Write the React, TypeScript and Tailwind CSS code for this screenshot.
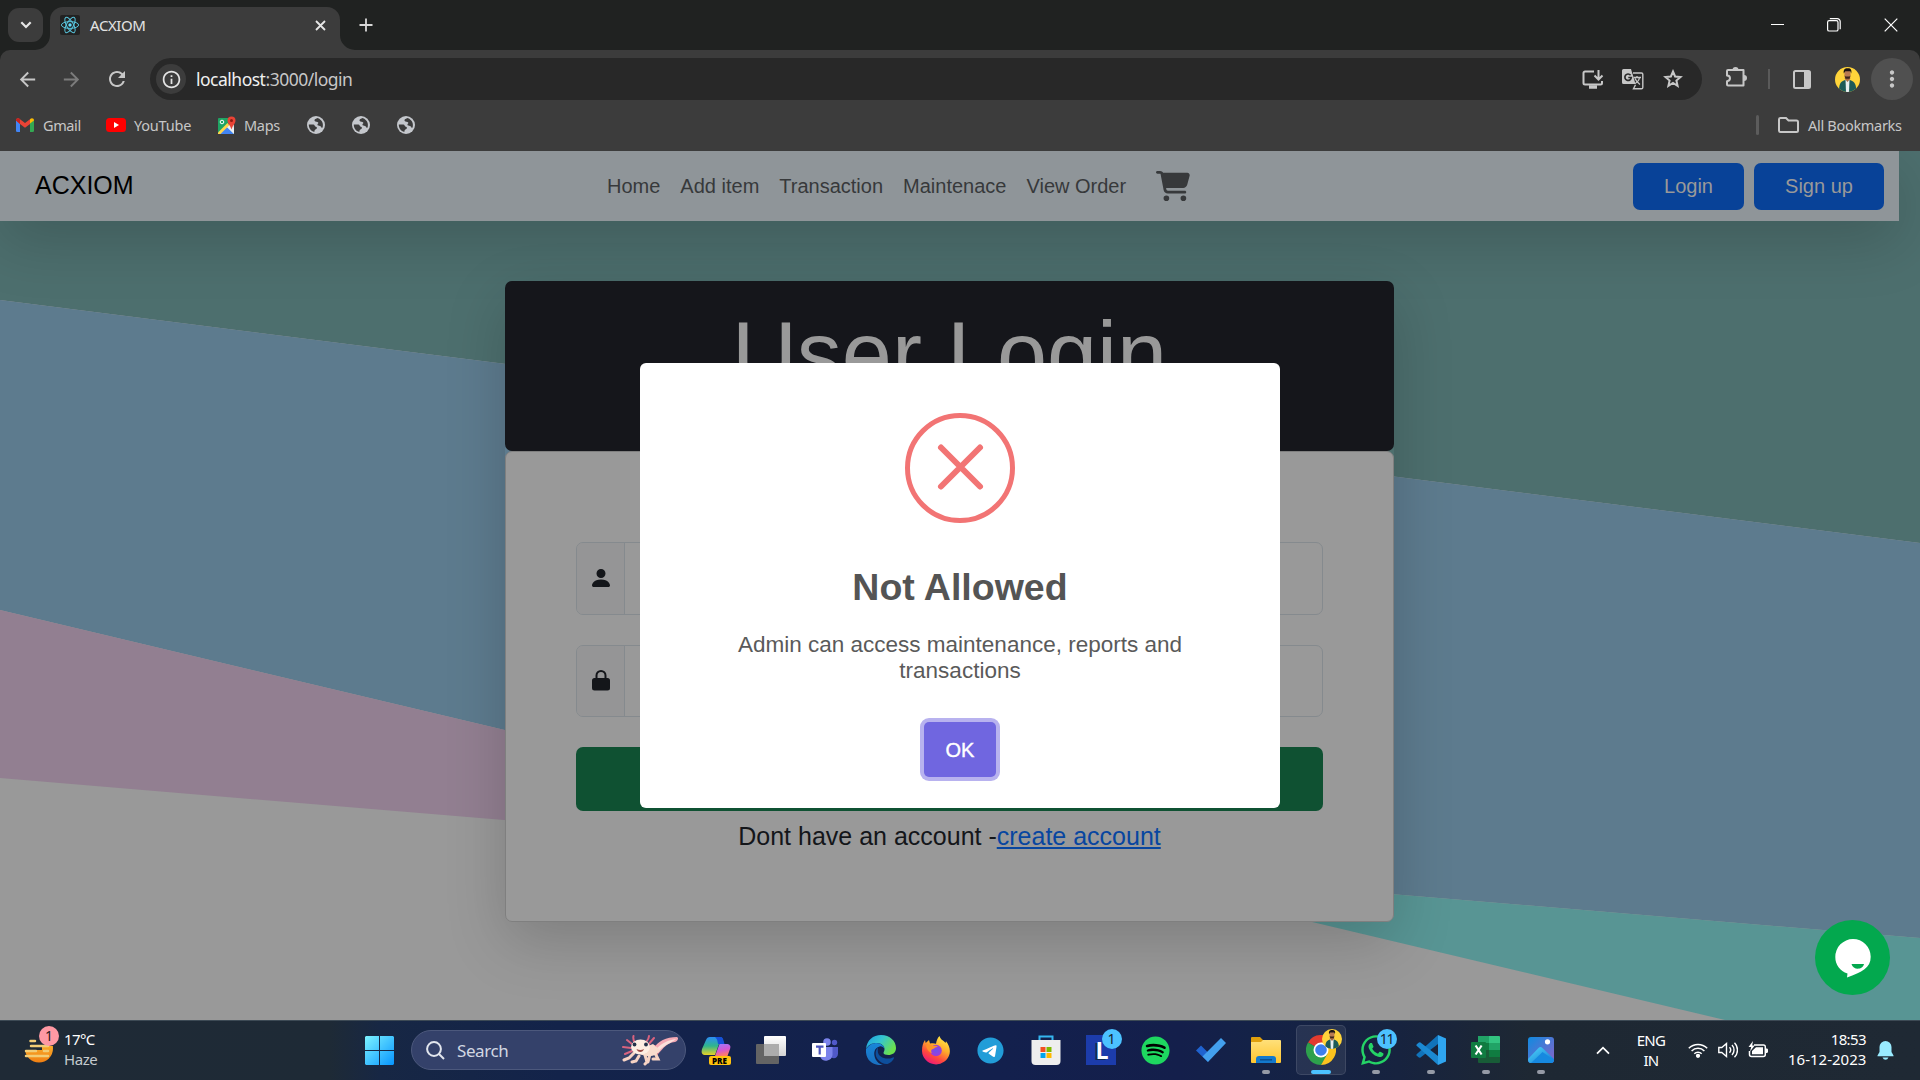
import React from "react";
import { FaCartShopping, FaSpotify, FaTelegram, FaWhatsapp } from "react-icons/fa6";
import { BsPersonFill } from "react-icons/bs";
import {
  MdArrowBack,
  MdArrowForward,
  MdRefresh,
  MdInfoOutline,
  MdMoreVert,
} from "react-icons/md";

const ui = "font-['Noto_Sans','Open_Sans',sans-serif]";

function ReactLogo() {
  return (
    <svg width="20" height="20" viewBox="0 0 20 20" className="shrink-0">
      <rect width="20" height="20" rx="2" fill="#222" />
      <g fill="none" stroke="#58c4dc" strokeWidth="1">
        <ellipse cx="10" cy="10" rx="8.6" ry="3.4" />
        <ellipse cx="10" cy="10" rx="8.6" ry="3.4" transform="rotate(60 10 10)" />
        <ellipse cx="10" cy="10" rx="8.6" ry="3.4" transform="rotate(120 10 10)" />
      </g>
      <circle cx="10" cy="10" r="1.7" fill="#61dafb" />
    </svg>
  );
}

function Gmail() {
  return (
    <svg width="18" height="14" viewBox="0 0 18 14">
      <path d="M0 2v10.7Q0 14 1.3 14H4V5z" fill="#4285f4" />
      <path d="M18 2v10.7Q18 14 16.700 14H14V5z" fill="#34a853" />
      <path d="M14 5.500V1.200C15.600-.3 18 .2 18 2.500z" fill="#fbbc04" />
      <path d="M0 2.500C0 .2 2.400-.3 4 1.200l5 3.800 5-3.800v4.800l-5 3.800-5-3.800z" fill="#ea4335" />
      <path d="M0 2.500C0 .2 2.400-.3 4 1.200V6z" fill="#c5221f" />
    </svg>
  );
}

function YouTube() {
  return (
    <svg width="20" height="14" viewBox="0 0 20 14">
      <rect width="20" height="14" rx="3.500" fill="#f00" />
      <path d="M8 4l5 3-5 3z" fill="#fff" />
    </svg>
  );
}

function Maps() {
  return (
    <svg width="19" height="19" viewBox="0 0 19 19">
      <rect x="1" y="2" width="16" height="16" rx="1" fill="#1fa463" />
      <path d="M17 18V8l-8.500 3z" fill="#dadce0" />
      <path d="M9.500 10.500L2 18h15z" fill="#4285f4" />
      <path d="M9.500 10.500l7.500 7.500V12l-4-4z" fill="#eceff1" />
      <path d="M1 16.500L10.500 7l1.800 2.300L3.500 18H1z" fill="#ffd54b" />
      <circle cx="5" cy="6" r="1.800" fill="none" stroke="#fff" />
      <path d="M14.500 0.500a4 4 0 0 1 4 4c0 3-2.700 4.500-4 9-1.300-4.500-4-6-4-9a4 4 0 0 1 4-4z" fill="#ea4335" />
      <circle cx="14.500" cy="4.500" r="1.500" fill="#8c1b12" />
    </svg>
  );
}

function Avatar({ size, id }: { size: number; id: string }) {
  return (
    <svg width={size} height={size} viewBox="0 0 25 25" className="shrink-0">
      <defs>
        <clipPath id={id}>
          <circle cx="12.500" cy="12.500" r="12.500" />
        </clipPath>
      </defs>
      <g clipPath={`url(#${id})`}>
        <rect width="25" height="25" fill="#ffd43a" />
        <path d="M4 25c0-8 1-10 6-12h5c5 2 6 4 6.500 12z" fill="#1d5a58" />
        <path d="M10.500 12.500h4L14 25h-3z" fill="#e8eef0" />
        <path d="M9.800 8h5.400v4l-2.700 3-2.700-3z" fill="#a86c45" />
        <ellipse cx="12.500" cy="7" rx="3.100" ry="4" fill="#b97b52" />
        <path d="M9.500 8.500l1 3.200h4l1-3.200-1 1h-4z" fill="#3a261c" />
        <path d="M8.800 6.500C8 1.500 11 1 13 1.300c3 0 4 2 3.200 5.200l-.9-2.200h-5z" fill="#1b1514" />
      </g>
    </svg>
  );
}

function TabStrip() {
  return (
    <div className="flex h-[50px] bg-[#202221] pl-2">
      <div className="mt-2 flex h-[34px] w-[35px] items-center justify-center rounded-[11px] bg-[#3c3c3c]">
        <svg width="12" height="8" viewBox="0 0 12 8" fill="none" stroke="#e6e6e6" strokeWidth="2.200">
          <path d="M1.300 1.300L6 6l4.700-4.700" />
        </svg>
      </div>
      <div className="relative ml-[7px] mt-[7px] flex h-[43px] w-[290px] items-center rounded-t-[13px] bg-[#3c3c3c] pl-[10px]">
        <svg className="absolute -left-[15px] bottom-0" width="15" height="15" viewBox="0 0 15 15">
          <path d="M15 0v15H0A15 15 0 0 0 15 0z" fill="#3c3c3c" />
        </svg>
        <svg className="absolute -right-[15px] bottom-0" width="15" height="15" viewBox="0 0 15 15">
          <path d="M0 0v15h15A15 15 0 0 1 0 0z" fill="#3c3c3c" />
        </svg>
        <div className="-mt-[7px] flex w-full items-center">
          <ReactLogo />
          <span className={`${ui} ml-[10px] text-[15px] leading-5 tracking-[-0.4px] text-[#e3e3e3]`}>ACXIOM</span>
          <svg className="ml-auto mr-[14px]" width="11" height="11" viewBox="0 0 11 11" stroke="#e6e6e6" strokeWidth="1.800">
            <path d="M1 1l9 9M10 1l-9 9" />
          </svg>
        </div>
      </div>
      <svg className="ml-[19px] mt-[18px]" width="14" height="14" viewBox="0 0 14 14" stroke="#d8d8d8" strokeWidth="1.800">
        <path d="M7 .5v13M.5 7h13" />
      </svg>
      <div className="ml-auto mr-[22px] mt-[18px] flex">
        <svg width="13" height="14" viewBox="0 0 13 14" stroke="#fff">
          <path d="M0 6.500h13" />
        </svg>
        <svg className="ml-[43px]" width="14" height="14" viewBox="0 0 14 14" fill="none" stroke="#fff" strokeWidth="1.200">
          <rect x=".6" y="2.600" width="10.400" height="10.400" rx="1.600" />
          <path d="M2.800.6h7.400a3 3 0 0 1 3 3v7.600" />
        </svg>
        <svg className="ml-[43px]" width="14" height="14" viewBox="0 0 14 14" stroke="#fff" strokeWidth="1.200">
          <path d="M.7.7l12.600 12.600M13.300.7L.7 13.300" />
        </svg>
      </div>
    </div>
  );
}

function AddressBar() {
  return (
    <div className="bg-[#202221]">
      <div className="flex h-[58px] items-center rounded-t-[10px] bg-[#3c3c3c]">
        <div className="ml-4 flex w-[134px] items-center gap-[21px]">
          <MdArrowBack size={23} color="#c7c7c7" />
          <MdArrowForward size={23} color="#7c7c7c" />
          <MdRefresh className="ml-px" size={24} color="#c7c7c7" />
        </div>
        <div className="flex h-[42px] w-[1552px] items-center rounded-full bg-[#282828] pl-[6px] pr-[19px]">
          <div className="flex h-[30px] w-[30px] items-center justify-center rounded-full bg-[#3c3c3c]">
            <MdInfoOutline size={21} color="#e3e3e3" />
          </div>
          <span className={`${ui} ml-[10px] text-[17.500px] leading-6 tracking-[-0.5px] text-[#c7c7c7]`}>
            <span className="text-[#f0f0f0]">localhost</span>:3000/login
          </span>
          <div className="ml-auto flex items-center">
            <svg width="22" height="19" viewBox="0 0 22 19" fill="none" stroke="#c7c7c7" strokeWidth="2">
              <path d="M12 1.500H3A1.500 1.500 0 0 0 1.500 3v10A1.500 1.500 0 0 0 3 14.500h15.500A1.500 1.500 0 0 0 20 13v-2" />
              <path d="M16.500 0v9M12.500 5.500l4 4 4-4" />
              <path d="M7 17h8" strokeWidth="3.500" />
            </svg>
            <svg className="ml-[18px]" width="22" height="22" viewBox="0 0 22 22">
              <path d="M1.500 1H9l4.500 15H1.500A1.500 1.500 0 0 1 0 14.500v-12A1.500 1.500 0 0 1 1.500 1z" fill="#c7c7c7" />
              <path d="M8.600 7.200a3.200 3.200 0 1 0 .7 2.300H6.300" fill="none" stroke="#282828" strokeWidth="1.700" />
              <path d="M11 5h8.500A1.300 1.300 0 0 1 20.800 6.300v13.200a1.300 1.300 0 0 1-1.300 1.300H11.500l2-4" fill="none" stroke="#c7c7c7" strokeWidth="1.400" />
              <path d="M11.500 9.500h7.500M15 8v1.500M17.500 9.500c-.5 3-2.500 5-4.500 6M13 10.500c1 2.500 3 4.500 5 6" fill="none" stroke="#c7c7c7" strokeWidth="1.300" />
            </svg>
            <svg className="ml-[19px]" width="20" height="20" viewBox="0 0 20 20" fill="none" stroke="#c7c7c7" strokeWidth="2">
              <path d="M10 2.500L12.100 7.500 17.500 8 13.400 11.500 14.600 16.800 10 14 5.400 16.800 6.600 11.500 2.500 8 7.900 7.500z" />
            </svg>
          </div>
        </div>
        {/* extensions puzzle piece: notch on the left, knobs on the top and right */}
        <svg className="ml-[23px] mb-[3px]" width="23" height="23" viewBox="0 0 23 23">
          <path
            d="M3 4h15.500v15.500H3q-1 0-1-1v-3.300q3-.2 3-2.900t-3-2.900V5q0-1 1-1z"
            fill="none"
            stroke="#c7c7c7"
            strokeWidth="2"
            strokeLinejoin="round"
          />
          <path d="M7.500 4a3 3 0 0 1 6 0zM19 9a3 3 0 0 1 0 6z" fill="#c7c7c7" />
        </svg>
        <div className="ml-[20px] h-5 w-[2px] bg-[#5a5a5a]" />
        <svg className="ml-[23px]" width="18" height="19" viewBox="0 0 18 19">
          <rect x="1" y="1" width="16" height="17" rx="1.500" fill="none" stroke="#c7c7c7" strokeWidth="2" />
          <path d="M11 1h6v17h-6z" fill="#c7c7c7" />
        </svg>
        <div className="ml-6">
          <Avatar size={25} id="avatar-toolbar" />
        </div>
        <div className="ml-[11px] flex h-[42px] w-[42px] items-center justify-center rounded-full bg-[#505050]">
          <MdMoreVert size={26} color="#c7c7c7" />
        </div>
      </div>
    </div>
  );
}

function Bookmarks() {
  const label = `${ui} text-[14.500px] leading-5 text-[#c7c7c7]`;
  return (
    <div className="flex h-[43px] items-center bg-[#3c3c3c] pb-[9px] pl-4 pr-[17px]">
      <div className="flex w-[90px] items-center gap-[9px]">
        <Gmail />
        <span className={`${label} tracking-[-0.4px]`}>Gmail</span>
      </div>
      <div className="flex w-[111px] items-center gap-2">
        <YouTube />
        <span className={`${label} tracking-[-0.2px]`}>YouTube</span>
      </div>
      <div className="flex w-[88px] items-center gap-2">
        <Maps />
        <span className={`${label} tracking-[-0.3px]`}>Maps</span>
      </div>
      <div className="flex gap-[23px]">
        {[0, 1, 2].map((i) => (
          <svg key={i} width="22" height="22" viewBox="0 0 22 22">
            <circle cx="11" cy="11" r="9" fill="#c4c7cc" />
            <path d="M3.800 10.500h4.500c1.500 0 1.200 2 2.500 2.300 1.200.2 1.400 1.200.8 1.900-1 .8-2.300 1-2.300 3.300C6 17.300 3.600 14 3.800 10.500zM12.500 4c-2.500.8-3.500 1.800-2.800 3s2.800.3 3.500 1.500-1.500 1.500-.5 2.800 3.500.2 3.700 2.400l1.300-.3c.7-3.400.2-7.300-5.200-9.400z" fill="#3c3c3c" />
          </svg>
        ))}
      </div>
      <div className="ml-auto h-5 w-[3px] rounded bg-[#5c5c5c]" />
      <svg className="ml-[19px]" width="21" height="16" viewBox="0 0 21 16" fill="none" stroke="#c7c7c7" strokeWidth="2">
        <path d="M2.500 1H8l2.500 2.500h8q1.500 0 1.500 1.500v8.500q0 1.500-1.500 1.500h-16Q1 15 1 13.500v-11Q1 1 2.500 1z" />
      </svg>
      <span className={`${label} ml-[9px] w-[95px] whitespace-nowrap tracking-[-0.3px]`}>All Bookmarks</span>
    </div>
  );
}

function Backdrop() {
  return (
    <svg className="absolute inset-0" width="1920" height="869" viewBox="0 151 1920 869">
      <rect y="151" width="1920" height="869" fill="#999" />
      <path d="M0 151H1920V543L0 300z" fill="#4d6f6e" />
      <path d="M0 300L1920 543V938L1089 869 0 610z" fill="#5d7b8e" />
      <path d="M0 610L1089 869 0 778z" fill="#927f91" />
      <path d="M1089 869L1920 938V1020H1725z" fill="#589594" />
    </svg>
  );
}

function Navbar() {
  return (
    <nav className="relative flex h-[70px] w-[1899px] items-center bg-[#8f9599] pl-[35px] pr-[15px] shadow-[0_20px_60px_rgba(0,0,0,0.175)]">
      <span className="-mt-[2px] w-[572px] text-[25px] leading-[38px] text-black">ACXIOM</span>
      <div className="flex items-center gap-5 whitespace-nowrap text-[20px] leading-[30px] text-[#37393b]">
        <span>Home</span>
        <span>Add item</span>
        <span>Transaction</span>
        <span>Maintenace</span>
        <span>View Order</span>
        <FaCartShopping className="ml-[10px]" size={34} />
      </div>
      <div className="ml-auto flex gap-[10px] text-[20px] leading-[30px] text-[#999]">
        <button className="h-[47px] w-[111px] rounded-[7px] bg-[#084298]">Login</button>
        <button className="h-[47px] w-[130px] rounded-[7px] bg-[#084298]">Sign up</button>
      </div>
    </nav>
  );
}

function Field({ children, height }: { children: React.ReactNode; height: string }) {
  return (
    <div className={`flex w-full rounded-[7px] border border-[#858a8e] ${height}`}>
      <div className="flex w-12 items-center justify-center rounded-l-[6px] border-r border-[#858a8e] bg-[#959596] pb-[2px] text-[#14161a]">
        {children}
      </div>
    </div>
  );
}

function LoginCard() {
  return (
    <div className="relative ml-[505px] mt-[60px] w-[889px] rounded-lg shadow-[0_20px_60px_rgba(0,0,0,0.175)]">
      <div className="h-[170px] rounded-[7px] bg-[#15161b] pt-[19px] text-center text-[90px] leading-[108px] text-[#999]">
        User Login
      </div>
      <div className="flex h-[471px] flex-col items-center rounded-[7px] border border-[#7f7f7f] bg-[#999] px-[70px] pt-[90px]">
        <Field height="h-[73px]">
          <BsPersonFill size={24} />
        </Field>
        <div className="h-[30px]" />
        <Field height="h-[72px]">
          <svg width="18" height="21" viewBox="0 0 18 21">
            <path d="M4.500 9V5.500a4.500 4.500 0 0 1 9 0V9" fill="none" stroke="#14161a" strokeWidth="2" />
            <rect y="8" width="18" height="12.500" rx="2.500" fill="#14161a" />
          </svg>
        </Field>
        <div className="mt-[30px] h-16 w-full rounded-[7px] bg-[#0f5132]" />
        <p className="mt-[6px] whitespace-nowrap text-[25px] leading-[38px] text-[#14161a]">
          Dont have an account -<span className="text-[#0846a0] underline">create account</span>
        </p>
      </div>
    </div>
  );
}

function Alert() {
  return (
    <div className="absolute left-[640px] top-[212px] flex h-[445px] w-[640px] flex-col items-center rounded-[6px] bg-white pt-[50px]">
      <svg width="110" height="110" viewBox="0 0 110 110" fill="none" stroke="#f27474" strokeWidth="5">
        <circle cx="55" cy="55" r="52.500" />
        <path d="M36 34.500L75 73.500M75 34.500L36 73.500" strokeWidth="6" strokeLinecap="round" />
      </svg>
      <h2 className="mt-[43px] text-[37.500px] font-bold leading-[42px] text-[#545454]">Not Allowed</h2>
      <p className="mt-[24px] w-[480px] text-center text-[22.500px] leading-[26px] text-[#5a5a5a]">
        Admin can access maintenance, reports and transactions
      </p>
      <button className="mt-[38px] h-[55px] w-[72px] rounded-[5px] bg-[#7066e0] text-[20px] text-white shadow-[0_0_0_4px_#b8b2ef] [-webkit-text-stroke:0.4px_white]">
        OK
      </button>
    </div>
  );
}

function ChatBubble() {
  return (
    <svg className="absolute left-[1815px] top-[769px]" width="75" height="75" viewBox="0 0 75 75">
      <circle cx="37.500" cy="37.500" r="37.500" fill="#03a84e" />
      <path d="M38 19a17.700 17.700 0 0 1 17.700 17.700C55.700 48 47 52 32 57.500l.5-4C25 51 20.300 45 20.300 37A17.700 17.700 0 0 1 38 19z" fill="#fff" />
      <path d="M36.500 44h12.500c-1 6-11 6.500-12.500 0z" fill="#03a84e" />
    </svg>
  );
}

function Weather() {
  return (
    <svg width="30" height="30" viewBox="0 0 30 30">
      <defs>
        <linearGradient id="sun" x2="0" y2="1">
          <stop stopColor="#ffc83a" />
          <stop offset="1" stopColor="#f07f13" />
        </linearGradient>
      </defs>
      <circle cx="15" cy="15.500" r="14" fill="url(#sun)" />
      <path d="M0 0h30v13H18v4H0z" fill="#1f2a36" />
      <g strokeWidth="2.500" strokeLinecap="round" stroke="#f2cd76">
        <path d="M6.500 8h4.500M7 13h17M2 18h10M20 18h4M2 23h22" />
      </g>
    </svg>
  );
}

function WindowsLogo() {
  return (
    <svg width="29" height="29" viewBox="0 0 29 29">
      <defs>
        <linearGradient id="win" x2="1" y2="1">
          <stop stopColor="#7df3ff" />
          <stop offset="1" stopColor="#0795ff" />
        </linearGradient>
      </defs>
      <path d="M1 0h13v14H0V1zM15 0h13l1 1v13H15zM0 15h14v14H1l-1-1zM15 15h14v13l-1 1H15z" fill="url(#win)" />
    </svg>
  );
}

function Axolotl() {
  return (
    <svg width="56" height="32" viewBox="0 0 56 32">
      <path d="M31 15C36 7 44 3 55 3c2 1 1 4-2 5-9 1-11 6-17 12z" fill="#f4a9b4" />
      <path d="M34 15c6-6 12-9 20-10-6 5-11 5-17 12z" fill="#fbe0da" />
      <g fill="none" stroke="#d9637f" strokeWidth="2" strokeLinecap="round">
        <path d="M13 9C11 6 11 4 11.500 2M10 10L5 6M9 14L1 13M10 17l-7 3M24 8c2-2 3-4 3-6M26 11l6-7M28 14l5-2M28 17l7 3" />
      </g>
      <g fill="none" stroke="#f6d3c4" strokeWidth="3" strokeLinecap="round">
        <path d="M12 19l-5 5-5 2M17 22l-3 5-4 1M23 21l2 7-2 2M33 19l3 6h-5M28 20l-2 8" />
      </g>
      <path d="M13 17c7 6 21 8 25-1l-7-6z" fill="#f8dccd" />
      <ellipse cx="18.500" cy="13" rx="9.500" ry="7.600" fill="#fdeee3" />
      <circle cx="12.500" cy="10.500" r="1.900" fill="#24324a" />
      <circle cx="24" cy="10.500" r="1.900" fill="#24324a" />
      <path d="M14.500 15q4 2 7.500 0-1 3-3.700 3t-3.800-3z" fill="#9a4a45" />
    </svg>
  );
}

function Copilot() {
  return (
    <div className="relative h-[30px] w-[30px]">
      <svg width="30" height="30" viewBox="0 0 30 30">
        <defs>
          <linearGradient id="cpA" x2="0" y2="1">
            <stop stopColor="#2c8df5" />
            <stop offset=".5" stopColor="#2fb58c" />
            <stop offset="1" stopColor="#e8d325" />
          </linearGradient>
          <linearGradient id="cpB" x2="0.300" y2="1">
            <stop stopColor="#9b7bff" />
            <stop offset=".6" stopColor="#d457d0" />
            <stop offset="1" stopColor="#ff7b6b" />
          </linearGradient>
        </defs>
        <path d="M9 2h10c2 0 2.500 1.500 3 3.500L23 9h-5l-4 11H5c-4 0-5-2-4-6L5 5c.8-2 2-3 4-3z" fill="url(#cpA)" />
        <path d="M14 2h5.500c2 0 2.500 1.500 3 3.500L23.500 9H17c-.5-4-1-5-3-7z" fill="#1550d8" />
        <path d="M18.500 9H25c4 0 5 2 4 5l-2.500 7H14z" fill="url(#cpB)" />
      </svg>
      <div className="absolute left-[8px] top-[21px] h-[9px] w-[22px] rounded-[2px] bg-[#ffc20e] text-center font-['Open_Sans',sans-serif] text-[8px] font-extrabold leading-[9px] text-black">
        PRE
      </div>
    </div>
  );
}

function TaskView() {
  return (
    <svg width="30" height="30" viewBox="0 0 30 30">
      <defs>
        <linearGradient id="tv" x2="0" y2="1">
          <stop stopColor="#fff" />
          <stop offset="1" stopColor="#d4d4d4" />
        </linearGradient>
      </defs>
      <rect x="8" y="1" width="22" height="20" rx="1" fill="url(#tv)" />
      <rect x="0" y="9" width="23" height="20" rx="1" fill="#646464" />
      <path d="M8 9h15v12H8z" fill="#acacac" />
    </svg>
  );
}

function Teams() {
  return (
    <svg width="28" height="26" viewBox="0 0 28 26">
      <circle cx="15" cy="5" r="3.800" fill="#7b83eb" />
      <circle cx="22.500" cy="5.500" r="2.700" fill="#5059c9" />
      <path d="M18 10h8v6.500c0 5-5 6-8 3z" fill="#5059c9" />
      <path d="M8 10h12.500v8a6.500 6.500 0 0 1-12 2.500z" fill="#7b83eb" />
      <rect y="6" width="14" height="14" rx="1" fill="#fff" />
      <path d="M4 9.600h7.500M7.700 9v8.500" stroke="#4b53bc" strokeWidth="2.200" />
    </svg>
  );
}

function Edge() {
  return (
    <svg width="30" height="30" viewBox="0 0 30 30">
      <defs>
        <linearGradient id="edA" x1="0" y1="0" x2="1" y2="0.500">
          <stop stopColor="#1b9de2" />
          <stop offset=".5" stopColor="#35c4d0" />
          <stop offset="1" stopColor="#6be04e" />
        </linearGradient>
        <linearGradient id="edB" x2="0" y2="1">
          <stop stopColor="#1886d9" />
          <stop offset="1" stopColor="#1a6fc0" />
        </linearGradient>
      </defs>
      <path d="M0 14C1 5 7 0 15 0c9 0 15 6 15 13 0 5-4 7-7.500 7-3 0-5-1-5-2 0-1 1-1.500 1-4 0-3-3-6-8-6C6 8 2 10 0 14z" fill="url(#edA)" />
      <path d="M0 14c3-4 6-6 10-6 5 0 8.500 3 8.500 6-1-2-3-3-5-2.500-4 1-6 5-5 9.500s4 8 8.500 9C8 31-1 26 0 14z" fill="url(#edB)" />
      <path d="M12 12.500c-3 3-3 8-.5 11.500s7 5.500 10 5c3-1 6-4 6.500-6 0-.8-.6-1-1.200-.6-6 3-15 0-15-6.400 0-1.500 0-2.500.2-3.500z" fill="#0e4f9c" />
    </svg>
  );
}

function Firefox() {
  return (
    <svg width="30" height="30" viewBox="0 0 30 30">
      <defs>
        <linearGradient id="ffA" x1=".8" y1="0" x2=".25" y2="1">
          <stop stopColor="#fff04a" />
          <stop offset=".4" stopColor="#ffab2b" />
          <stop offset=".7" stopColor="#ff4a3d" />
          <stop offset="1" stopColor="#ea1280" />
        </linearGradient>
        <radialGradient id="ffB">
          <stop stopColor="#6b52ee" />
          <stop offset="1" stopColor="#a03bd5" />
        </radialGradient>
      </defs>
      <path d="M18.500 1c1 4 4 4 6 7l.5-1.800c3 3.500 4.500 8 3.600 12.500A14 14 0 0 1 1 16C1 11 2 8 4 5l.7 3L8 5l1 3.500c2-.5 4-.5 6 .2.500-3 1.500-5.700 3.500-7.700z" fill="url(#ffA)" />
      <circle cx="15" cy="15.500" r="5.800" fill="url(#ffB)" />
      <path d="M5 10c3-1 5-.5 7 1 2-.6 4 0 5 1-3-.3-3 1.500-5 2-2.500.5-2 3-1 4-3-.5-5.500-4-6-8z" fill="#ff9328" />
    </svg>
  );
}

function Store() {
  return (
    <svg width="30" height="30" viewBox="0 0 30 30">
      <path d="M8.500 6V1.500h13V6" fill="none" stroke="#35b5f0" strokeWidth="2" />
      <path d="M.5 5h29v21a4 4 0 0 1-4 4h-21a4 4 0 0 1-4-4z" fill="#eeeeee" />
      <path d="M9.500 12h5v5h-5z" fill="#f25022" />
      <path d="M15.500 12h5v5h-5z" fill="#7fba00" />
      <path d="M9.500 18h5v5h-5z" fill="#00a4ef" />
      <path d="M15.500 18h5v5h-5z" fill="#ffb900" />
    </svg>
  );
}

function LApp() {
  return (
    <div className="relative flex h-[30px] w-[30px] items-center justify-center bg-[#1c3cab]">
      <span className="pl-[3px] font-['Open_Sans',sans-serif] text-[23px] font-bold leading-none text-white [text-shadow:-2px_1px_0_#102a50]">L</span>
      <div className={`${ui} absolute -right-[6px] -top-[6px] flex h-5 w-5 items-center justify-center rounded-full bg-[#4cc2ff] text-[14px] leading-none text-[#14222e]`}>
        1
      </div>
    </div>
  );
}

function Todo() {
  return (
    <svg width="30" height="26" viewBox="0 0 30 26">
      <path d="M0 13.500L5 8.500l8.500 8.500-1.500 8z" fill="#1f62cf" />
      <path d="M25 1l5 5-18 19-5.500-5.500z" fill="#43a0ee" />
    </svg>
  );
}

function Explorer() {
  return (
    <svg width="30" height="28" viewBox="0 0 30 28">
      <defs>
        <linearGradient id="fe" x2="0" y2="1">
          <stop stopColor="#ffe07a" />
          <stop offset="1" stopColor="#ffc52e" />
        </linearGradient>
      </defs>
      <path d="M0 2Q0 1 1 1h8l3 3h17v10H0z" fill="#e0a00d" />
      <path d="M0 6h10l2-2h17q1 0 1 1v21q0 1-1 1H1q-1 0-1-1z" fill="url(#fe)" />
      <path d="M5 27v-4a3 3 0 0 1 3-3h14a3 3 0 0 1 3 3v4z" fill="#1379cd" />
      <path d="M9 23.800h12" stroke="#0b4d8c" strokeWidth="1.400" />
    </svg>
  );
}

function Chrome() {
  return (
    <div className="relative ml-px h-[30px] w-[30px]">
      <svg width="30" height="30" viewBox="0 0 30 30">
        <path d="M15 15L2 7.500A15 15 0 0 1 28 7.500z" fill="#e33b2e" />
        <path d="M2 7.500A15 15 0 0 0 15 30l7-11-7-4z" fill="#2da04c" />
        <path d="M28 7.500A15 15 0 0 1 15 30l6.500-11.300L15 7.500z" fill="#fcc31e" />
        <circle cx="15" cy="15" r="7.500" fill="#fff" />
        <circle cx="15" cy="15" r="5.800" fill="#3d7fee" />
      </svg>
      <div className="absolute -right-[6px] -top-[6px]">
        <Avatar size={20} id="avatar-taskbar" />
      </div>
    </div>
  );
}

function VsCode() {
  return (
    <svg width="30" height="30" viewBox="0 0 30 30">
      <path d="M22 0l8 3.500v23L22 30z" fill="#2fa5ef" />
      <path d="M22 0v9L4.500 22.500Q3.500 23 2.500 22.300L.6 20.600Q0 20 .6 19.200z" fill="#1173ba" />
      <path d="M22 30v-9L4.500 7.500Q3.500 7 2.500 7.700L.6 9.400Q0 10 .6 10.800z" fill="#1b89d2" />
    </svg>
  );
}

function Excel() {
  return (
    <svg width="29" height="28" viewBox="0 0 29 28">
      <path d="M7 0h11v7H7z" fill="#21a366" />
      <path d="M18 0h10q1 0 1 1v6H18z" fill="#33c481" />
      <path d="M7 7h11v7H7z" fill="#107c41" />
      <path d="M18 7h11v7H18z" fill="#21a366" />
      <path d="M7 14h11v7H7z" fill="#185c37" />
      <path d="M18 14h11v7H18z" fill="#107c41" />
      <path d="M7 21h22v5q0 1-1 1H8q-1 0-1-1z" fill="#185c37" />
      <rect y="6" width="15" height="16" rx="1" fill="#107c41" />
      <path d="M4.600 9.500l6 9M10.600 9.500l-6 9" stroke="#fff" strokeWidth="2.200" />
    </svg>
  );
}

function Photos() {
  return (
    <svg width="26" height="26" viewBox="0 0 26 26">
      <defs>
        <linearGradient id="phA" x2="1" y2="1">
          <stop stopColor="#0f8be0" />
          <stop offset="1" stopColor="#8a62c8" />
        </linearGradient>
        <linearGradient id="phB" x2="1" y2="1">
          <stop stopColor="#4fd8f8" />
          <stop offset="1" stopColor="#1277d8" />
        </linearGradient>
      </defs>
      <rect width="26" height="26" rx="3" fill="url(#phA)" />
      <path d="M0 22L10.500 11q2-2 4 0L26 22q0 4-3 4H3q-3 0-3-4z" fill="url(#phB)" />
      <path d="M3 26l11.500-11L26 23q-.5 3-3 3z" fill="#1689e0" />
      <circle cx="19.500" cy="4.800" r="2.600" fill="#fff" />
    </svg>
  );
}

function TaskCell({ children, state }: { children: React.ReactNode; state?: "open" | "active" }) {
  return (
    <div className="relative flex h-[50px] w-[55px] items-center justify-center">
      {state === "active" && <div className="absolute inset-y-0 left-[3px] right-[2px] rounded-[5px] border border-white/10 bg-white/[0.08]" />}
      <div className="relative">{children}</div>
      {state === "open" && <div className="absolute bottom-[1px] h-1 w-2 rounded-full bg-[#959aa6]" />}
      {state === "active" && <div className="absolute bottom-[1px] h-1 w-5 rounded-full bg-[#4cc2ff]" />}
    </div>
  );
}

function Taskbar() {
  return (
    <footer className={`${ui} flex h-[60px] items-start border-t border-[#3d4a55] bg-[linear-gradient(90deg,#1f2a36_0px,#1e2a36_330px,#172744_380px,#13234a_560px,#13204d_1000px,#141f4b_1180px,#142247_1250px,#17233f_1400px,#1e2833_1530px,#1f2934_1920px)] pt-1`}>
      <div className="relative ml-6 mt-[8px] flex w-[328px]">
        <Weather />
        <div className="absolute left-[15px] top-[-7px] flex h-5 w-5 items-center justify-center rounded-full bg-[#ff99a4] text-[14px] leading-none text-[#2a1a20]">1</div>
        <div className="-mt-[4px] ml-[10px] text-[15px] leading-5 tracking-[-0.6px] text-white">
          <div>17°C</div>
          <div className="tracking-[-0.45px] text-[#c5cacf]">Haze</div>
        </div>
      </div>
      <TaskCell>
        <WindowsLogo />
      </TaskCell>
      <div className="ml-1 mr-[2px] mt-[5px] flex h-10 w-[275px] items-center rounded-full border border-[#4c587c] bg-[#34416a] pl-[14px] pr-[7px]">
        <svg width="19" height="19" viewBox="0 0 19 19" fill="none" stroke="#e2e6ee" strokeWidth="2">
          <circle cx="8" cy="8" r="6.900" />
          <path d="M13 13l5 5" />
        </svg>
        <span className="ml-[12px] mt-px text-[17px] leading-6 tracking-[-0.4px] text-[#d2d7e2]">Search</span>
        <div className="ml-auto">
          <Axolotl />
        </div>
      </div>
      <TaskCell><Copilot /></TaskCell>
      <TaskCell><TaskView /></TaskCell>
      <TaskCell><Teams /></TaskCell>
      <TaskCell><Edge /></TaskCell>
      <TaskCell><Firefox /></TaskCell>
      <TaskCell>
        <div className="rounded-full bg-[radial-gradient(circle,#fff_55%,transparent_56%)]">
          <FaTelegram size={27} color="#229dd8" />
        </div>
      </TaskCell>
      <TaskCell><Store /></TaskCell>
      <TaskCell><LApp /></TaskCell>
      <TaskCell>
        <div className="rounded-full bg-[radial-gradient(circle,#000_60%,transparent_61%)]">
          <FaSpotify size={29} color="#1ed760" />
        </div>
      </TaskCell>
      <TaskCell><Todo /></TaskCell>
      <TaskCell state="open"><Explorer /></TaskCell>
      <TaskCell state="active"><Chrome /></TaskCell>
      <TaskCell state="open">
        <div className="relative">
          <FaWhatsapp size={34} color="#25d366" />
          <div className="absolute -right-[4px] -top-[4px] flex h-5 w-5 items-center justify-center rounded-full bg-[#4cc2ff] text-[14px] leading-none tracking-[-1.2px] text-[#14222e]">
            11
          </div>
        </div>
      </TaskCell>
      <TaskCell state="open"><VsCode /></TaskCell>
      <TaskCell state="open"><Excel /></TaskCell>
      <TaskCell state="open"><Photos /></TaskCell>
      <div className="ml-auto mr-[26px] flex h-[50px] items-center text-[15px] leading-5 text-white">
        <svg width="14" height="9" viewBox="0 0 14 9" fill="none" stroke="#fff" strokeWidth="1.800">
          <path d="M1 7.700L7 1.700l6 6" />
        </svg>
        <div className="ml-[24px] w-[34px] text-center tracking-[-0.7px]">
          <div>ENG</div>
          <div>IN</div>
        </div>
        <svg className="ml-[20px]" width="20" height="16" viewBox="0 0 20 16" fill="none" stroke="#fff" strokeWidth="1.500">
          <path d="M.8 6.200a13 13 0 0 1 18.400 0M3.600 9a9 9 0 0 1 12.800 0M6.300 11.700a5.200 5.200 0 0 1 7.400 0" />
          <circle cx="10" cy="13.800" r="1.400" fill="#fff" />
        </svg>
        <svg className="ml-[10px]" width="20" height="18" viewBox="0 0 20 18" fill="none" stroke="#fff" strokeWidth="1.400">
          <path d="M.8 6.500h3L8.500 2.500v13L3.800 11.500h-3zM11.500 6.300a4 4 0 0 1 0 5.400M14 4a7.200 7.200 0 0 1 0 10M16.500 1.700a10.500 10.500 0 0 1 0 14.600" />
        </svg>
        <svg className="ml-[10px]" width="20" height="18" viewBox="0 0 20 18">
          <path d="M6 4h9.500A1.800 1.800 0 0 1 17.300 6v7.500a2 2 0 0 1-2 2H3.500a2 2 0 0 1-2-2V10" fill="none" stroke="#fff" strokeWidth="1.500" />
          <path d="M8 6.300h7v7H4V10zM18 7.500h1.200l.8 1v2.500l-.8 1H18z" fill="#fff" />
          <path d="M5 0L.5 6h2.700L2 10.500 6.800 4.500H4.200z" fill="#fff" />
        </svg>
        <div className="-mt-[2px] ml-[20px] w-[78px] whitespace-nowrap text-right">
          <div className="tracking-[-0.6px]">18:53</div>
          <div>16-12-2023</div>
        </div>
        <svg className="ml-[11px]" width="17" height="19" viewBox="0 0 17 19">
          <path d="M8.500 0a6 6 0 0 1 6 6v5l2 3.500v.8H.5v-.8l2-3.500V6a6 6 0 0 1 6-6z" fill="#99ebff" />
          <path d="M5.500 16.500h6q-1 2.300-3 2.300t-3-2.300z" fill="#99ebff" />
        </svg>
      </div>
    </footer>
  );
}

export default function App() {
  return (
    <div className="flex h-[1080px] w-[1920px] flex-col overflow-hidden font-['Liberation_Sans',sans-serif]">
      <TabStrip />
      <AddressBar />
      <Bookmarks />
      <main className="relative h-[869px] overflow-hidden">
        <Backdrop />
        <Navbar />
        <LoginCard />
        <Alert />
        <ChatBubble />
      </main>
      <Taskbar />
    </div>
  );
}
